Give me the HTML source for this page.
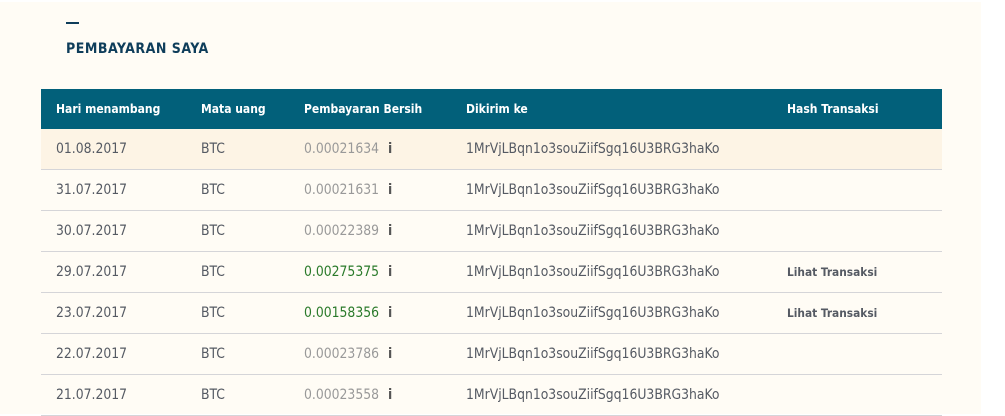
<!DOCTYPE html>
<html><head><style>
html,body{margin:0;padding:0;background:#fff;}
body{width:1005px;height:414px;overflow:hidden;position:relative;font-family:"DejaVu Sans Condensed","Liberation Sans",sans-serif;}
.panel{position:absolute;left:0;top:2px;width:981px;height:412px;background:#fffcf5;}
.dash{position:absolute;left:66px;top:22px;width:13px;height:2px;background:#0e3d5a;}
.title{position:absolute;left:66px;top:41px;font-size:14px;font-weight:bold;letter-spacing:0.5px;color:#0e3d5a;}
table{position:absolute;left:41px;top:89px;width:901px;border-collapse:collapse;table-layout:fixed;}
th{background:#02607a;color:#fff;font-size:12px;font-weight:bold;text-align:left;height:40px;padding:0;}
td{height:40px;border-bottom:1px solid #d5d5d8;font-size:13.8px;color:#555a63;padding:0;white-space:nowrap;}
tr.hl td{background:#fdf4e5;}
.c1{padding-left:15px;}
.g{color:#999}.gr{color:#2a7a2a}
.i{font-weight:bold;color:#555;margin-left:9px}
td.lk{font-size:11.8px;font-weight:bold;color:#555a63}
</style></head><body>
<div class="panel"></div>
<div class="dash"></div>
<div class="title">PEMBAYARAN SAYA</div>
<table>
<colgroup><col style="width:160px"><col style="width:103px"><col style="width:162px"><col style="width:321px"><col style="width:155px"></colgroup>
<tr><th class="c1">Hari menambang</th><th>Mata uang</th><th>Pembayaran Bersih</th><th>Dikirim ke</th><th>Hash Transaksi</th></tr>
<tr class="hl"><td class="c1">01.08.2017</td><td>BTC</td><td><span class="g">0.00021634</span><span class="i">i</span></td><td>1MrVjLBqn1o3souZiifSgq16U3BRG3haKo</td><td></td></tr>
<tr><td class="c1">31.07.2017</td><td>BTC</td><td><span class="g">0.00021631</span><span class="i">i</span></td><td>1MrVjLBqn1o3souZiifSgq16U3BRG3haKo</td><td></td></tr>
<tr><td class="c1">30.07.2017</td><td>BTC</td><td><span class="g">0.00022389</span><span class="i">i</span></td><td>1MrVjLBqn1o3souZiifSgq16U3BRG3haKo</td><td></td></tr>
<tr><td class="c1">29.07.2017</td><td>BTC</td><td><span class="gr">0.00275375</span><span class="i">i</span></td><td>1MrVjLBqn1o3souZiifSgq16U3BRG3haKo</td><td class="lk">Lihat Transaksi</td></tr>
<tr><td class="c1">23.07.2017</td><td>BTC</td><td><span class="gr">0.00158356</span><span class="i">i</span></td><td>1MrVjLBqn1o3souZiifSgq16U3BRG3haKo</td><td class="lk">Lihat Transaksi</td></tr>
<tr><td class="c1">22.07.2017</td><td>BTC</td><td><span class="g">0.00023786</span><span class="i">i</span></td><td>1MrVjLBqn1o3souZiifSgq16U3BRG3haKo</td><td></td></tr>
<tr><td class="c1">21.07.2017</td><td>BTC</td><td><span class="g">0.00023558</span><span class="i">i</span></td><td>1MrVjLBqn1o3souZiifSgq16U3BRG3haKo</td><td></td></tr>
</table>
</body></html>
